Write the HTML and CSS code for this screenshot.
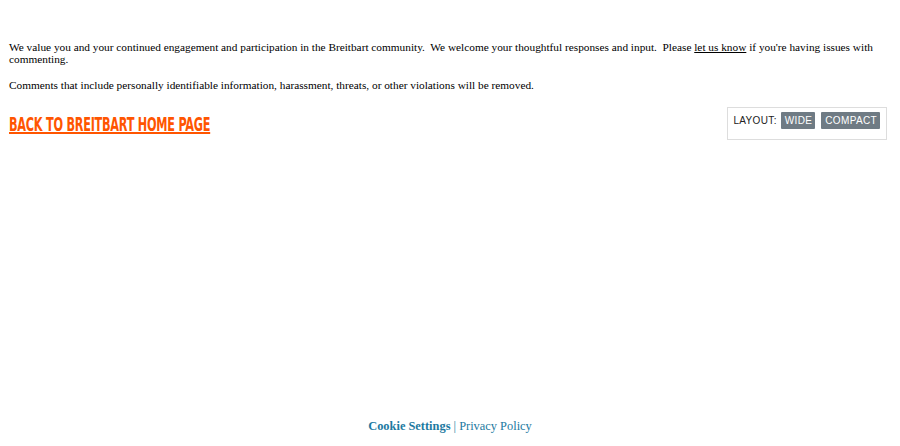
FILE: index.html
```html
<!DOCTYPE html>
<html>
<head>
<meta charset="utf-8">
<link rel="stylesheet" href="styles.css">
</head>
<body>
<div class="page">
  <div class="intro">
    <p>We value you and your continued engagement and participation in the Breitbart community.&nbsp; We welcome your thoughtful responses and input.&nbsp; Please <a href="#" class="inline-link">let us know</a> if you're having issues with commenting.</p>
    <p>Comments that include personally identifiable information, harassment, threats, or other violations will be removed.</p>
  </div>
  <div class="toolbar">
    <a href="#" class="home-link"><span class="home-text">Back to Breitbart Home Page</span></a>
    <div class="layout-box">
      <span class="layout-label">LAYOUT:</span>
      <span class="layout-btn">WIDE</span>
      <span class="layout-btn">COMPACT</span>
    </div>
  </div>
  <div class="spacer"></div>
  <div class="footer">
    <a href="#" class="cookie">Cookie Settings</a> | <a href="#" class="privacy">Privacy Policy</a>
  </div>
</div>
</body>
</html>
```
FILE: styles.css
```css
html, body {
  margin: 0;
  padding: 0;
  background: #fff;
}
body {
  font-family: "Liberation Serif", "Times New Roman", serif;
  font-size: 11.3px;
  color: #000;
}
.page {
  height: 446px;
  display: flex;
  flex-direction: column;
  padding: 0 9px;
  box-sizing: border-box;
}
.intro {
  padding-top: 41px;
}
.intro p {
  margin: 0 0 14px 0;
  line-height: 12px;
}
.inline-link {
  color: #000;
  text-decoration: underline;
}
.toolbar {
  display: flex;
  justify-content: space-between;
  align-items: flex-start;
  margin-top: 2px;
  padding-right: 4px;
}
.home-link {
  color: #ff5500;
  text-decoration: none;
  margin-top: 6px;
  display: inline-block;
}
.home-text {
  display: inline-block;
  font-family: "DejaVu Sans Condensed", "DejaVu Sans", sans-serif;
  font-weight: 700;
  font-size: 19.5px;
  text-transform: uppercase;
  letter-spacing: -0.4px;
  transform: scaleX(0.643);
  transform-origin: left center;
  white-space: nowrap;
  text-decoration: underline;
  text-decoration-thickness: 2px;
  text-underline-offset: 1px;
}
.layout-box {
  border: 1px solid #ddd;
  padding: 4px 6px 10px 5px;
  display: flex;
  align-items: center;
  font-family: "Liberation Sans", Arial, sans-serif;
  font-size: 10px;
  letter-spacing: 0.35px;
}
.layout-label {
  color: #222;
  margin-right: 4px;
}
.layout-btn {
  background: #6f7b84;
  color: #fff;
  padding: 3px 3px 3px 4px;
  border-radius: 1px;
  line-height: 11px;
}
.layout-btn + .layout-btn {
  margin-left: 6px;
}
.spacer {
  flex: 1;
}
.footer {
  text-align: center;
  font-size: 12.4px;
  color: #1d7aa1;
  padding-bottom: 12px;
}
.footer a {
  color: #1d7aa1;
  text-decoration: none;
}
.cookie {
  font-weight: 700;
}
```
